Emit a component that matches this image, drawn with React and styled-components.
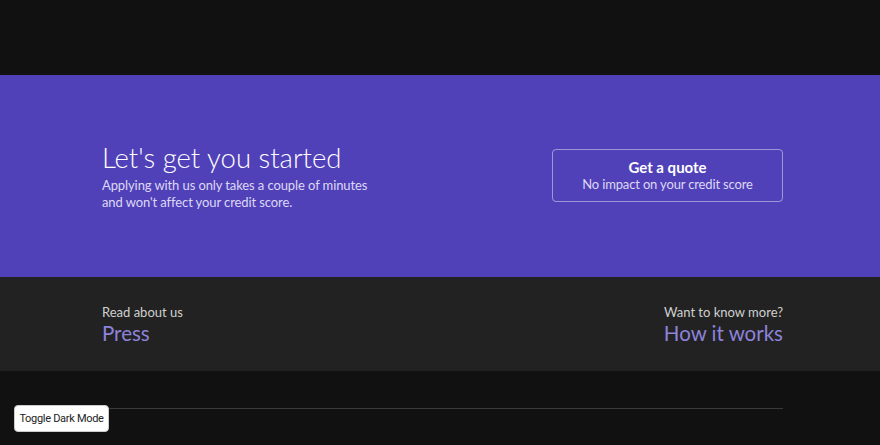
import React from 'react'
import styled, { createGlobalStyle } from 'styled-components'

const Global = createGlobalStyle`
  html, body {
    margin: 0;
    padding: 0;
    background: #111111;
    font-family: Lato, "Open Sans", sans-serif;
  }
`

function App() {
  return (
    <>
      <Global />
      <Page>
        <TopBar />
        <Hero>
          <Inner>
            <Intro>
              <Title>Let's get you started</Title>
              <Lead>
                Applying with us only takes a couple of minutes
                <br />
                and won't affect your credit score.
              </Lead>
            </Intro>
            <QuoteButton href="#">
              <strong>Get a quote</strong>
              <span>No impact on your credit score</span>
            </QuoteButton>
          </Inner>
        </Hero>
        <Links>
          <Inner>
            <LinkBlock>
              <small>Read about us</small>
              <a href="#">Press</a>
            </LinkBlock>
            <LinkBlock $right>
              <small>Want to know more?</small>
              <a href="#">How it works</a>
            </LinkBlock>
          </Inner>
        </Links>
        <Footer>
          <Inner>
            <Rule />
          </Inner>
        </Footer>
      </Page>
      <Toggle>Toggle Dark Mode</Toggle>
    </>
  )
}

export default App

const Page = styled.div`
  min-height: 445px;
  background: #111111;
`

const TopBar = styled.div`
  height: 75px;
  background: #111111;
`

const Inner = styled.div`
  padding: 0 97px 0 102px;
  display: flex;
  align-items: center;
  justify-content: space-between;
`

const Hero = styled.section`
  height: 202px;
  background: #5141b9;
  display: flex;
  flex-direction: column;
  justify-content: center;
`

const Intro = styled.div`
  display: flex;
  flex-direction: column;
`

const Title = styled.h1`
  margin: 0;
  font-weight: 300;
  font-size: 27.5px;
  line-height: 32px;
  color: #ffffff;
`

const Lead = styled.p`
  margin: 3px 0 0;
  font-size: 13px;
  line-height: 17px;
  letter-spacing: -0.1px;
  color: #ddd8f4;
`

const QuoteButton = styled.a`
  width: 231px;
  height: 53px;
  box-sizing: border-box;
  border: 1px solid rgba(255, 255, 255, 0.45);
  border-radius: 4px;
  display: flex;
  flex-direction: column;
  align-items: center;
  justify-content: center;
  text-decoration: none;
  margin-top: -2px;

  strong {
    font-size: 15px;
    line-height: 18px;
    font-weight: 700;
    color: #ffffff;
  }

  span {
    font-size: 13px;
    line-height: 16px;
    letter-spacing: -0.15px;
    color: #ddd8f4;
  }
`

const Links = styled.section`
  height: 94px;
  background: #222222;
  display: flex;
  flex-direction: column;
  justify-content: center;
`

const LinkBlock = styled.div`
  display: flex;
  flex-direction: column;
  align-items: ${p => (p.$right ? 'flex-end' : 'flex-start')};
  padding-top: 1px;

  small {
    font-size: 13px;
    line-height: 16px;
    color: #d0d0d0;
  }

  a {
    font-size: 20.5px;
    line-height: 26px;
    font-weight: 400;
    color: #8d82dc;
    text-decoration: none;
  }
`

const Footer = styled.footer`
  padding-top: 37px;
`

const Rule = styled.hr`
  flex: 1;
  margin: 0;
  border: none;
  border-top: 1px solid #3a3a3a;
`

const Toggle = styled.button`
  position: fixed;
  left: 14px;
  bottom: 13px;
  width: 95px;
  height: 27px;
  background: #ffffff;
  border: 1px solid #cccccc;
  border-radius: 4px;
  font-family: Roboto, "Liberation Sans", sans-serif;
  font-size: 11px;
  letter-spacing: -0.3px;
  color: #222222;
  padding: 0;
`
